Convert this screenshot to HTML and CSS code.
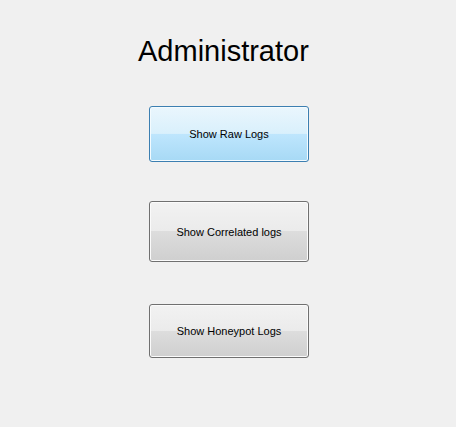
FILE: index.html
```html
<!DOCTYPE html>
<html>
<head>
<meta charset="utf-8">
<link rel="stylesheet" href="styles.css">
</head>
<body>
<div class="form">
  <h1 class="title">Administrator</h1>
  <div class="buttons">
    <button class="btn btn-hot btn-raw">Show Raw Logs</button>
    <button class="btn btn-corr">Show Correlated logs</button>
    <button class="btn btn-honey">Show Honeypot Logs</button>
  </div>
</div>
</body>
</html>
```
FILE: styles.css
```css
html, body {
  margin: 0;
  padding: 0;
  background: #f0f0f0;
  width: 456px;
  height: 427px;
  overflow: hidden;
}
.form {
  display: flex;
  flex-direction: column;
  align-items: flex-start;
  padding-left: 149px;
}
.title {
  margin: 33px 0 0 -11px;
  font-family: "Liberation Sans", Arial, sans-serif;
  font-weight: normal;
  font-size: 29px;
  line-height: 36px;
  color: #000;
}
.buttons {
  display: flex;
  flex-direction: column;
  margin-top: 37px;
}
.btn {
  box-sizing: border-box;
  width: 160px;
  padding: 0;
  margin: 0;
  font-family: "Liberation Sans", Arial, sans-serif;
  font-size: 11px;
  color: #000;
  border: 1px solid #707070;
  border-radius: 3px;
  box-shadow: inset 0 0 0 1px #fbfbfb;
  background: linear-gradient(to bottom, #f2f2f2 0%, #ebebeb 49%, #dddddd 50%, #cfcfcf 100%);
}
.btn-hot {
  border-color: #3c7fb1;
  box-shadow: inset 0 0 0 1px #f4fbfe;
  background: linear-gradient(to bottom, #eaf6fd 0%, #d9f0fc 49%, #bee6fd 50%, #a7d9f5 100%);
}
.btn-raw { height: 56px; }
.btn-corr { height: 61px; margin-top: 39px; }
.btn-honey { height: 54px; margin-top: 42px; }
```
